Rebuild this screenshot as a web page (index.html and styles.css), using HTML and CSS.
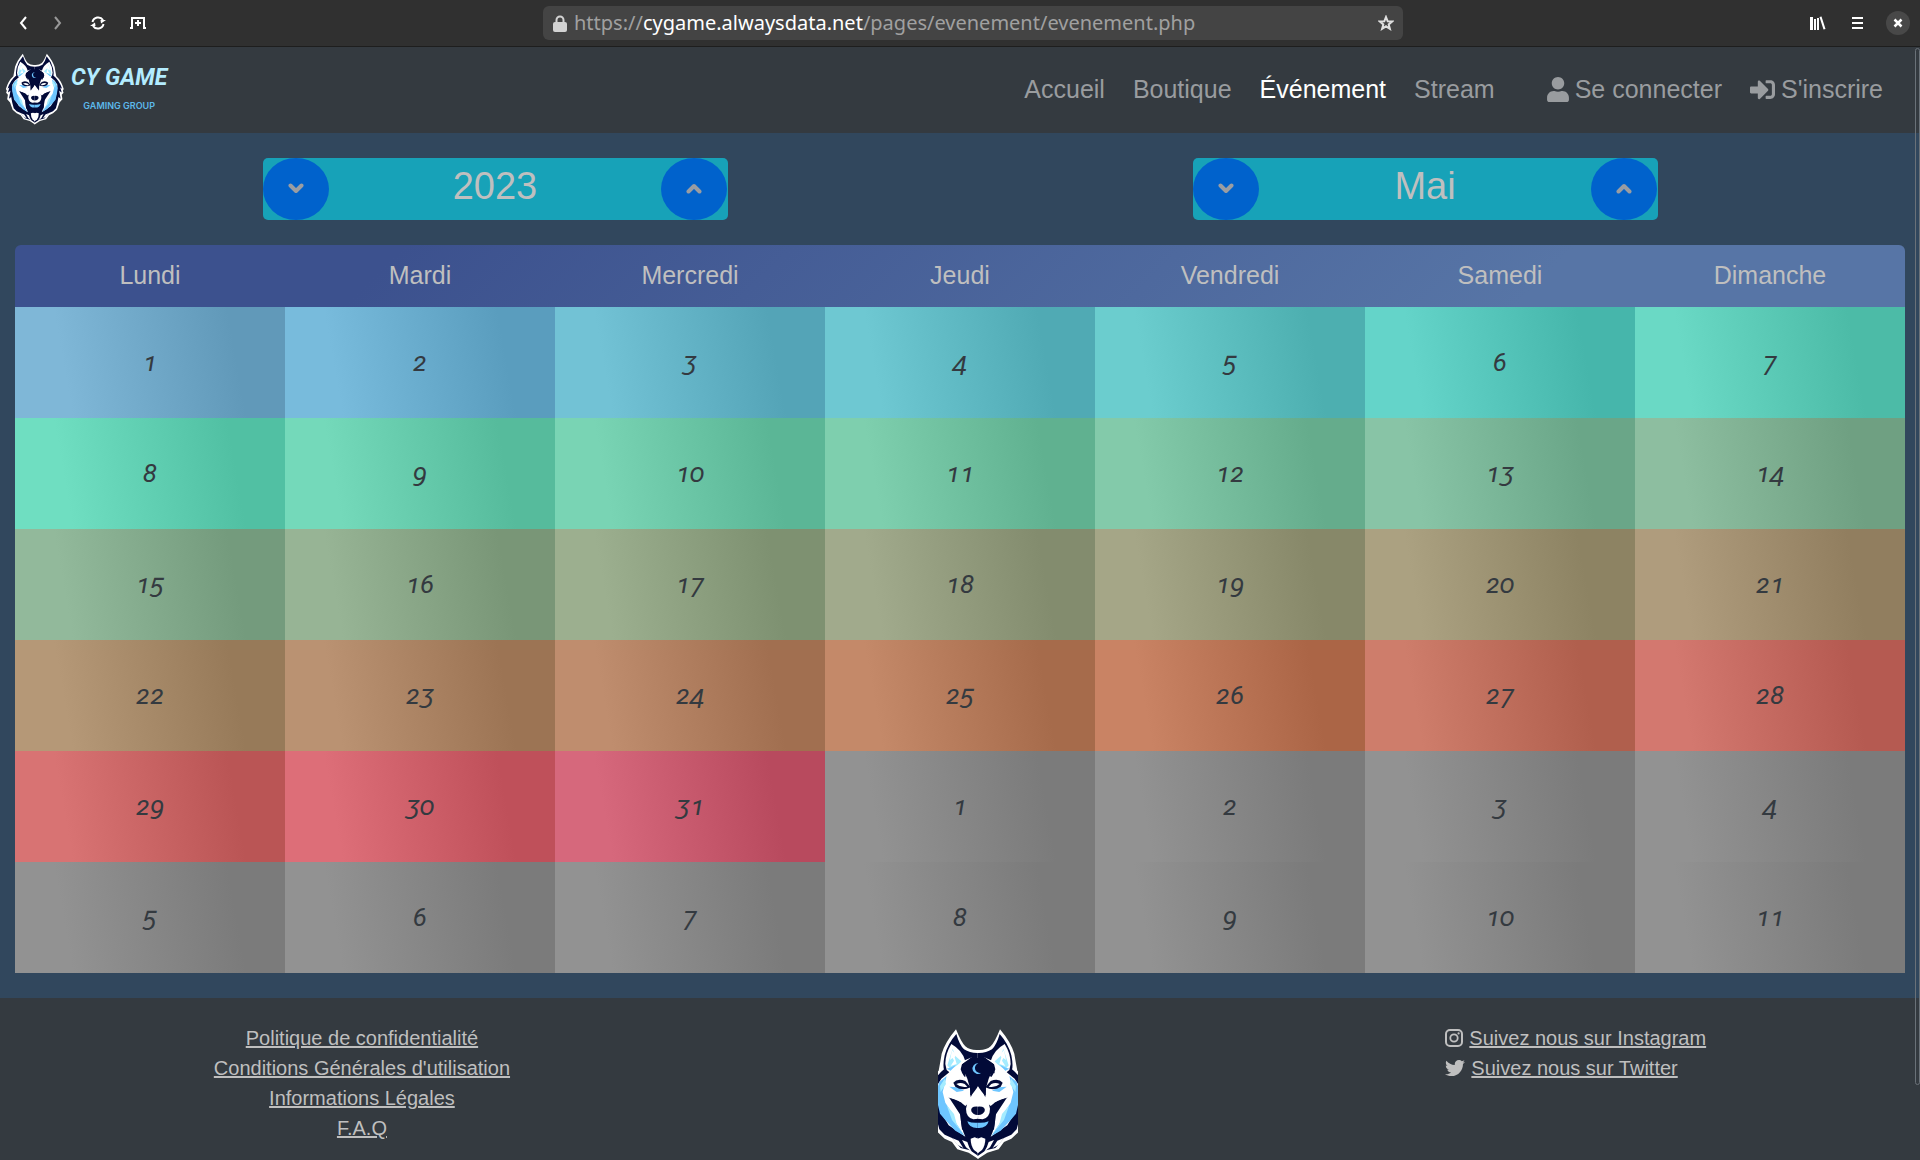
FILE: index.html
```html
<!DOCTYPE html>
<html lang="fr">
<head>
<meta charset="utf-8">
<title>CY Game - Événement</title>
<link rel="stylesheet" href="styles.css">
</head>
<body>
<svg class="defs" aria-hidden="true">
  <defs>
    <g id="wolf-base">
      <path fill="#fff" d="M229 154Q205 156 190 143Q178 132 162 92Q130 130 119 165Q115 190 110 216Q82 240 69 286L74 296L70 306L80 318L76 342L92 360L106 400L128 420L150 430L166 452L200 462L229 481Z"/>
      <path fill="#020a38" d="M229 163Q204 164 186 152Q172 138 163 106Q137 135 128 170Q122 200 126 212Q92 240 78 285L88 278L80 305L94 296L86 340L98 330L104 362L112 392L128 408L150 418L176 448L204 455L229 472Z"/>
    </g>
    <g id="wolf-half">
      <path fill="#fff" d="M148 136Q130 165 130 196L134 214L146 224L190 188Q182 155 148 136Z"/>
      <path fill="#a5ecff" d="M152 150L136 200L146 212L158 214L178 188L160 172Z"/>
      <path fill="#fff" d="M150 154L144 184L152 178L156 186L146 202L164 196L158 176L162 168Z"/>
      <path fill="#6ec6ff" d="M134 210L148 206L162 198L148 218Z"/>
      <path fill="#fff" d="M210 176Q170 190 140 222L118 240L104 262L106 300L116 340L140 380L190 414Q176 386 176 350L142 298Q172 304 190 322L206 308Q204 290 204 268L196 240L190 226L188 236L180 222L176 212L180 196Z"/>
      <path fill="#6ec6ff" d="M134 232L112 250L102 280L106 310L114 345L128 362L160 396L188 412L160 370L148 340L130 312L122 280Z"/>
      <path fill="#a5ecff" d="M128 240L114 262L116 280L132 256ZM134 320L150 364L184 406L164 376L156 346Z"/>
      <path fill="#6ec6ff" d="M142 264L164 280L186 276L168 266Z"/>
      <path fill="#020a38" d="M154 252Q166 238 190 247L206 266Q180 278 160 264Z"/>
      <path fill="#fff" d="M163 256Q176 250 188 256L196 264Q176 268 163 256Z"/>
      <path fill="#020a38" d="M138 296L158 308L174 320L172 330L180 392L206 416L229 416L229 360Q196 366 190 346L186 334L178 312Z"/>
      <path fill="#fff" d="M229 262L216 280L200 296L192 330Q192 356 214 362L229 360Z"/>
      <path fill="#020a38" d="M206 296L222 266L229 260L229 230L206 240Z"/>
      <path fill="#020a38" d="M229 324Q204 322 208 338Q214 350 229 349ZM227 348L229 364L214 366L196 358L204 368L229 370Z"/>
      <path fill="#6ec6ff" d="M196 368Q212 374 229 372L229 388Q202 390 196 368Z"/>
      <path fill="#fff" d="M229 420L218 416L206 420Q206 440 216 454L229 464Z"/>
      <path fill="#fff" d="M180 424L196 430Q200 446 210 460L192 446ZM150 418L170 426L184 448L166 438Z"/>
    </g>
    <symbol id="wolf" viewBox="64 88 330 396" overflow="visible">
      <use href="#wolf-base"/>
      <use href="#wolf-base" transform="translate(456 0) scale(-1 1)"/>
      <use href="#wolf-half"/>
      <use href="#wolf-half" transform="translate(456 0) scale(-1 1)"/>
      <path fill="#020a38" d="M206 178L250 178L274 200L278 224L264 220L268 234L256 230L250 252L238 270L228 262L216 272L204 250L200 228L190 234L192 220L180 224L184 198Z"/>
      <path fill="#6ec6ff" d="M229 194A16 16 0 1 0 238 222A13 13 0 1 1 229 194Z"/>
    </symbol>
  </defs>
</svg>

<header class="toolbar">
  <div class="tools">
    <button class="tool" aria-label="Précédent"><svg width="16" height="16" viewBox="0 0 16 16"><path d="M10 2L5 8l5 6" fill="none" stroke="#fff" stroke-width="2"/></svg></button>
    <button class="tool dim" aria-label="Suivant"><svg width="16" height="16" viewBox="0 0 16 16"><path d="M5 2l5 6-5 6" fill="none" stroke="#fff" stroke-width="2"/></svg></button>
    <button class="tool" aria-label="Actualiser"><svg width="16" height="16" viewBox="0 0 16 16"><path d="M2.500 7A5.800 5.800 0 0 1 13 5M13.500 9A5.800 5.800 0 0 1 3 11" fill="none" stroke="#fff" stroke-width="2"/><path d="M16 5l-5 3.500L10.500 5zM0 11l5-3.500.5 3.500z" fill="#fff"/></svg></button>
    <button class="tool" aria-label="Nouvel onglet"><svg width="16" height="16" viewBox="0 0 16 16"><path d="M0 13h2V3h12v10h2M8 5v6M5 8h6" fill="none" stroke="#fff" stroke-width="2"/></svg></button>
  </div>
  <div class="address">
    <svg width="14" height="17" viewBox="0 0 14 17"><path d="M3.500 8V5a3.500 3.500 0 0 1 7 0v3" fill="none" stroke="#d3d3d3" stroke-width="2"/><rect y="7" width="14" height="10" rx="2" fill="#d3d3d3"/></svg>
    <div class="url" role="textbox" aria-label="Adresse">https://<b>cygame.alwaysdata.net</b>/pages/evenement/evenement.php</div>
    <svg width="16" height="16" viewBox="0 0 16 16"><path d="M8 2l1.700 4.300 4.500.200-3.500 2.900 1.200 4.400L8 11.300l-3.900 2.500 1.200-4.400-3.500-2.900 4.500-.2z" fill="none" stroke="#e0e0e0" stroke-width="2"/></svg>
  </div>
  <div class="tools right">
    <button class="tool" aria-label="Bibliothèque"><svg width="16" height="16" viewBox="0 0 16 16"><path d="M0 2h3v13H0zM4 4h2v11H4zM7 3h2v12H7zM9.500 2l2-.5L15.500 14l-2 .6z" fill="#fff"/></svg></button>
    <button class="tool" aria-label="Menu"><svg width="16" height="16" viewBox="0 0 16 16"><path d="M2 3h11M2 8h11M2 13h11" stroke="#fff" stroke-width="2"/></svg></button>
    <button class="tool close" aria-label="Fermer"><svg width="16" height="16" viewBox="0 0 16 16"><path d="M4.500 4.500l7 7M11.500 4.500l-7 7" stroke="#fff" stroke-width="2.500"/></svg></button>
  </div>
</header>

<div class="page">
  <nav class="navbar">
    <a class="brand" href="#">
      <svg class="brand-wolf" width="60" height="72"><use href="#wolf"/></svg>
      <span class="brand-text"><span class="brand-name">CY GAME</span><span class="brand-sub">GAMING GROUP</span></span>
    </a>
    <div class="links">
      <a href="#">Accueil</a>
      <a href="#">Boutique</a>
      <a href="#" class="active">Événement</a>
      <a href="#">Stream</a>
    </div>
    <div class="links account">
      <a href="#"><svg width="22" height="25" viewBox="0 0 448 512"><path fill="currentColor" d="M224 256c70.700 0 128-57.300 128-128S294.700 0 224 0 96 57.300 96 128s57.300 128 128 128zm89.600 32h-16.700c-22.200 10.200-46.900 16-72.900 16s-50.600-5.800-72.900-16h-16.700C60.200 288 0 348.200 0 422.400V464c0 26.500 21.500 48 48 48h352c26.500 0 48-21.500 48-48v-41.600c0-74.200-60.200-134.400-134.400-134.400z"/></svg>Se connecter</a>
      <a href="#"><svg width="25" height="25" viewBox="0 0 512 512"><path fill="currentColor" d="M416 448h-84c-6.600 0-12-5.400-12-12v-40c0-6.600 5.400-12 12-12h84c17.700 0 32-14.300 32-32V160c0-17.700-14.300-32-32-32h-84c-6.600 0-12-5.400-12-12V76c0-6.600 5.400-12 12-12h84c53 0 96 43 96 96v192c0 53-43 96-96 96zm-47-201L201 79c-15-15-41-4.500-41 17v96H24c-13.300 0-24 10.700-24 24v96c0 13.300 10.700 24 24 24h136v96c0 21.500 26 32 41 17l168-168c9.300-9.400 9.300-24.600 0-34z"/></svg>S'inscrire</a>
    </div>
  </nav>

  <main>
    <div class="pickers">
      <div class="picker">
        <button aria-label="Année précédente"><svg width="16" height="11" viewBox="0 0 16 11"><path d="M2.500 2.500L8 8l5.500-5.500"/></svg></button>
        <span>2023</span>
        <button aria-label="Année suivante"><svg width="16" height="11" viewBox="0 0 16 11"><path d="M2.500 8.500L8 3l5.500 5.500"/></svg></button>
      </div>
      <div class="picker">
        <button aria-label="Mois précédent"><svg width="16" height="11" viewBox="0 0 16 11"><path d="M2.500 2.500L8 8l5.500-5.500"/></svg></button>
        <span>Mai</span>
        <button aria-label="Mois suivant"><svg width="16" height="11" viewBox="0 0 16 11"><path d="M2.500 8.500L8 3l5.500 5.500"/></svg></button>
      </div>
    </div>
    <table class="calendar">
      <thead><tr><th>Lundi</th><th>Mardi</th><th>Mercredi</th><th>Jeudi</th><th>Vendredi</th><th>Samedi</th><th>Dimanche</th></tr></thead>
      <tbody>
        <tr><td class="d1">1</td><td class="d2">2</td><td class="d3">3</td><td class="d4">4</td><td class="d5">5</td><td class="d6">6</td><td class="d7">7</td></tr>
        <tr><td class="d8">8</td><td class="d9">9</td><td class="d10">10</td><td class="d11">11</td><td class="d12">12</td><td class="d13">13</td><td class="d14">14</td></tr>
        <tr><td class="d15">15</td><td class="d16">16</td><td class="d17">17</td><td class="d18">18</td><td class="d19">19</td><td class="d20">20</td><td class="d21">21</td></tr>
        <tr><td class="d22">22</td><td class="d23">23</td><td class="d24">24</td><td class="d25">25</td><td class="d26">26</td><td class="d27">27</td><td class="d28">28</td></tr>
        <tr><td class="d29">29</td><td class="d30">30</td><td class="d31">31</td><td class="out">1</td><td class="out">2</td><td class="out">3</td><td class="out">4</td></tr>
        <tr><td class="out">5</td><td class="out">6</td><td class="out">7</td><td class="out">8</td><td class="out">9</td><td class="out">10</td><td class="out">11</td></tr>
      </tbody>
    </table>
  </main>

  <footer>
    <div class="legal">
      <a href="#">Politique de confidentialité</a>
      <a href="#">Conditions Générales d'utilisation</a>
      <a href="#">Informations Légales</a>
      <a href="#">F.A.Q</a>
    </div>
    <svg class="footer-wolf" width="80" height="132" viewBox="108 88 240 396"><use href="#wolf" x="64" y="88" width="330" height="396"/></svg>
    <div class="social">
      <div><svg width="18" height="18" viewBox="0 0 18 18"><rect x="1" y="1" width="16" height="16" rx="4" fill="none" stroke="currentColor" stroke-width="2"/><circle cx="9" cy="9" r="3.700" fill="none" stroke="currentColor" stroke-width="1.800"/><circle cx="13.600" cy="4.400" r="1.100" fill="currentColor"/></svg><a href="#">Suivez nous sur Instagram</a></div>
      <div><svg width="20" height="20" viewBox="0 0 512 512"><path fill="currentColor" d="M459.370 151.716c.325 4.548.325 9.097.325 13.645 0 138.720-105.583 298.558-298.558 298.558-59.452 0-114.680-17.219-161.137-47.106 8.447.974 16.568 1.299 25.340 1.299 49.055 0 94.213-16.568 130.274-44.832-46.132-.975-84.792-31.188-98.112-72.772 6.498.974 12.995 1.624 19.818 1.624 9.421 0 18.843-1.300 27.614-3.573-48.081-9.747-84.143-51.980-84.143-102.985v-1.299c13.969 7.797 30.214 12.670 47.431 13.319-28.264-18.843-46.781-51.005-46.781-87.391 0-19.492 5.197-37.360 14.294-52.954 51.655 63.675 129.300 105.258 216.365 109.807-1.624-7.797-2.599-15.918-2.599-24.040 0-57.828 46.782-104.934 104.934-104.934 30.213 0 57.502 12.670 76.670 33.137 23.715-4.548 46.456-13.320 66.599-25.340-7.798 24.366-24.366 44.833-46.132 57.827 21.117-2.273 41.584-8.122 60.426-16.243-14.292 20.791-32.161 39.308-52.628 54.253z"/></svg><a href="#">Suivez nous sur Twitter</a></div>
    </div>
  </footer>
  <div class="scroll-thumb"></div>
</div>
</body>
</html>
```
FILE: styles.css
```css
* { box-sizing: border-box; }

body {
  margin: 0;
  height: 100vh;
  display: flex;
  flex-direction: column;
  overflow: hidden;
  background: #343a40;
  color: #bfbfbf;
  font-family: "Liberation Sans", Arial, sans-serif;
}

button { border: 0; padding: 0; font: inherit; color: inherit; background: none; }
a { color: inherit; }
svg { display: block; flex: none; }
.defs { position: absolute; width: 0; height: 0; }

/* Browser toolbar */
.toolbar {
  flex: none;
  display: grid;
  grid-template-columns: 533fr 860px 507fr;
  align-items: center;
  height: 47px;
  padding: 0 10px;
  background: #303030;
  border-bottom: 1px solid #1e1e1e;
}
.tools { display: flex; align-items: center; gap: 16px; padding-left: 2px; }
.tools .tool { display: grid; place-items: center; width: 24px; height: 24px; }
.tools .tool:first-child { margin-right: -6px; }
.tools .dim { opacity: .5; }
.tools.right { justify-content: flex-end; padding: 0; }
.tools.right .tool:first-child { margin: 0; }
.tools .close { border-radius: 50%; background: #484848; }
.address {
  display: flex;
  align-items: center;
  gap: 7px;
  height: 34px;
  padding: 0 9px 0 10px;
  border-radius: 6px;
  background: #444;
}
.url { flex: 1; color: #a0a0a0; font: 20px/34px "Noto Sans", sans-serif; white-space: nowrap; }
.url b { font-weight: 400; color: #fff; }

/* Page viewport */
.page { flex: 1; min-height: 0; position: relative; overflow: hidden; }

.navbar {
  display: flex;
  align-items: center;
  height: 86px;
  padding: 0 37px 2px 5px;
  background: #343a40;
}
.brand { display: flex; align-items: center; gap: 6px; margin-right: auto; text-decoration: none; }
.brand-text { display: flex; flex-direction: column; align-items: center; }
.brand-name { font: italic 700 23px/34px Roboto, sans-serif; color: #b3ecff; }
.brand-sub { font: 600 9px/22px Inter, sans-serif; color: #5cb8ea; }
.links { display: flex; gap: 28px; font-size: 25px; line-height: 38px; color: #999c9f; }
.links a { display: flex; align-items: center; gap: 6px; text-decoration: none; }
.links .active { color: #fff; }
.account { margin-left: 52px; }

main { padding: 25px 15px; background: #31475d; }
.pickers { display: grid; grid-template-columns: 1fr 1fr; justify-items: center; padding: 0 15px; margin-bottom: 25px; }
.picker {
  display: flex;
  align-items: center;
  justify-content: space-between;
  width: 50%;
  height: 62px;
  border-radius: 5px;
  background: #17a2b8;
  font-size: 38px;
}
.picker span { padding-bottom: 6px; }
.picker button { display: grid; place-items: center; width: 66px; height: 62px; padding-bottom: 2px; border-radius: 50%; background: #0062cc; }
.picker path { fill: none; stroke: #9a9da2; stroke-width: 4; stroke-linecap: round; stroke-linejoin: round; }

.calendar {
  width: 100%;
  table-layout: fixed;
  border-collapse: collapse;
  border-radius: 6px 6px 0 0;
  overflow: hidden;
  text-align: center;
}
.calendar th, .calendar td { padding: 0 0 2px; }
.calendar thead { background: linear-gradient(135deg, #3c518e 20%, #5775a6 80%); }
.calendar th { height: 62px; font-size: 25px; font-weight: 400; }
.calendar td {
  height: 111px;
  background: linear-gradient(80deg,
    rgb(var(--r), var(--g), var(--b)) 20%,
    rgb(calc(var(--r) - 30), calc(var(--g) - 30), calc(var(--b) - 30)) 80%);
  color: #343a40;
  font: italic 26px Roboto, sans-serif;
  font-variant-numeric: oldstyle-nums;
}
.calendar .out { background: linear-gradient(80deg, #929292 20%, #7b7b7b 80%); }
.d1 { --r: 127; --g: 183; --b: 215; }
.d2 { --r: 120; --g: 187; --b: 220; }
.d3 { --r: 114; --g: 194; --b: 213; }
.d4 { --r: 110; --g: 200; --b: 210; }
.d5 { --r: 107; --g: 205; --b: 206; }
.d6 { --r: 100; --g: 212; --b: 201; }
.d7 { --r: 106; --g: 217; --b: 197; }
.d8 { --r: 111; --g: 222; --b: 193; }
.d9 { --r: 116; --g: 217; --b: 186; }
.d10 { --r: 121; --g: 212; --b: 180; }
.d11 { --r: 126; --g: 207; --b: 174; }
.d12 { --r: 131; --g: 202; --b: 170; }
.d13 { --r: 136; --g: 196; --b: 166; }
.d14 { --r: 141; --g: 190; --b: 160; }
.d15 { --r: 146; --g: 185; --b: 155; }
.d16 { --r: 151; --g: 180; --b: 149; }
.d17 { --r: 156; --g: 175; --b: 143; }
.d18 { --r: 161; --g: 170; --b: 140; }
.d19 { --r: 165; --g: 166; --b: 135; }
.d20 { --r: 171; --g: 161; --b: 129; }
.d21 { --r: 175; --g: 156; --b: 125; }
.d22 { --r: 181; --g: 152; --b: 119; }
.d23 { --r: 186; --g: 146; --b: 114; }
.d24 { --r: 191; --g: 141; --b: 110; }
.d25 { --r: 196; --g: 137; --b: 105; }
.d26 { --r: 201; --g: 131; --b: 100; }
.d27 { --r: 206; --g: 125; --b: 107; }
.d28 { --r: 211; --g: 120; --b: 111; }
.d29 { --r: 216; --g: 115; --b: 115; }
.d30 { --r: 221; --g: 110; --b: 120; }
.d31 { --r: 214; --g: 104; --b: 124; }

footer {
  display: flex;
  justify-content: space-around;
  align-items: flex-start;
  padding-top: 25px;
  background: #343a40;
  font-size: 20px;
  line-height: 30px;
}
.legal { display: flex; flex-direction: column; align-items: center; }
.footer-wolf { margin-top: 5px; overflow: hidden; }
.social div { display: flex; align-items: center; gap: 6px; }

.scroll-thumb {
  position: absolute;
  top: 1px;
  right: 0;
  width: 5px;
  height: 1037px;
  border: 1px solid #6a7178;
  border-radius: 3px;
}
```
